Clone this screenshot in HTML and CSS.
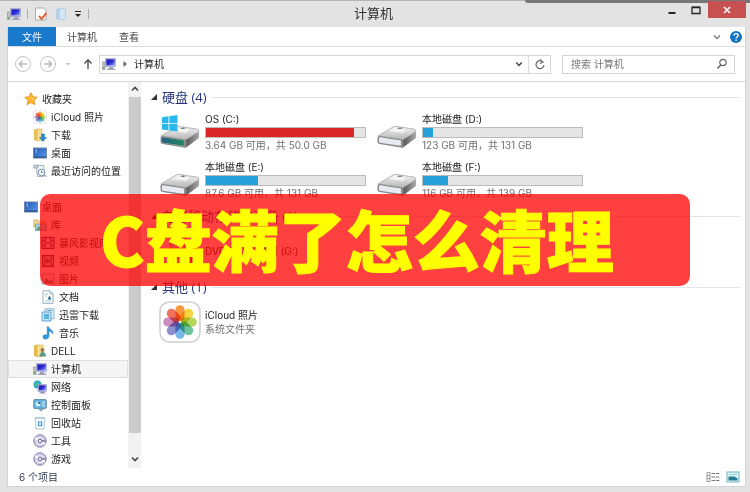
FILE: index.html
```
<!DOCTYPE html>
<html lang="zh-CN">
<head>
<meta charset="utf-8">
<title>计算机</title>
<link rel="stylesheet" href="styles.css">
</head>
<body>
<svg class="sprite" aria-hidden="true">
  <defs>
    <linearGradient id="g-body" x1="0" y1="0" x2="0" y2="1"><stop offset="0" stop-color="#f2f2f2"/><stop offset="1" stop-color="#b4b4b4"/></linearGradient>
    <linearGradient id="g-side" x1="0" y1="0" x2="1" y2="0"><stop offset="0" stop-color="#555"/><stop offset="1" stop-color="#aaa"/></linearGradient>
    <linearGradient id="g-os" x1="0" y1="0" x2="1" y2="0"><stop offset="0" stop-color="#2a5f7c"/><stop offset="1" stop-color="#1c8a62"/></linearGradient>
    <linearGradient id="g-screen" x1="0" y1="0" x2="1" y2="1"><stop offset="0" stop-color="#1616b8"/><stop offset=".5" stop-color="#2a2ad0"/><stop offset="1" stop-color="#8fa2f0"/></linearGradient>
    <linearGradient id="g-desk" x1="0" y1="0" x2="1" y2="1"><stop offset="0" stop-color="#2158b8"/><stop offset="1" stop-color="#5b9ae8"/></linearGradient>
    <radialGradient id="g-disc"><stop offset="0" stop-color="#fff"/><stop offset="1" stop-color="#c3c2e0"/></radialGradient>
  </defs>
  <symbol id="pc" viewBox="0 0 14 14"><rect x="0.5" y="5" width="2.5" height="7.5" fill="#c9c9c4" stroke="#888" stroke-width=".6"/><rect x="1" y="10" width="1.5" height="1.5" fill="#4a4"/><rect x="3.5" y="1.5" width="10" height="8" fill="#dadaf0" stroke="#9a9ac4" stroke-width=".7"/><rect x="4.3" y="2.3" width="8.4" height="6.2" fill="url(#g-screen)"/><path d="M7 10h4v1.5h2V13H5v-1.500h2z" fill="#9fa3b8"/></symbol>
  <symbol id="star" viewBox="0 0 14 14"><path d="M7 .8l1.900 4 4.400.5-3.300 3 .9 4.400L7 10.500l-3.900 2.200.9-4.400-3.300-3 4.400-.5z" fill="#ffb72e" stroke="#e08a1c" stroke-width=".8"/><path d="M7 3l1 3 3 .4-3 .8z" fill="#ffe18a"/></symbol>
  <symbol id="petals" viewBox="0 0 40 40">
    <g class="petals">
      <rect x="15.600" y="4" width="8.800" height="15" rx="4.400" fill="#f99a3c"/>
      <rect x="15.600" y="4" width="8.800" height="15" rx="4.400" fill="#f5d640" transform="rotate(45 20 20)"/>
      <rect x="15.600" y="4" width="8.800" height="15" rx="4.400" fill="#b5d65a" transform="rotate(90 20 20)"/>
      <rect x="15.600" y="4" width="8.800" height="15" rx="4.400" fill="#6cc49c" transform="rotate(135 20 20)"/>
      <rect x="15.600" y="4" width="8.800" height="15" rx="4.400" fill="#76b7e6" transform="rotate(180 20 20)"/>
      <rect x="15.600" y="4" width="8.800" height="15" rx="4.400" fill="#8c8fd0" transform="rotate(225 20 20)"/>
      <rect x="15.600" y="4" width="8.800" height="15" rx="4.400" fill="#cc8cc0" transform="rotate(270 20 20)"/>
      <rect x="15.600" y="4" width="8.800" height="15" rx="4.400" fill="#f37260" transform="rotate(315 20 20)"/>
    </g>
  </symbol>
  <symbol id="photos" viewBox="0 0 40 40"><rect x="1" y="1" width="38" height="38" rx="9" fill="#fff" stroke="#cfcfd4" stroke-width="1.500"/><use href="#petals"/></symbol>
  <symbol id="download" viewBox="0 0 14 14"><path d="M1 1.500l4-1V13l-4-1z" fill="#e8bf5a"/><path d="M4 1h5v11.500H4z" fill="#f6dd93" stroke="#d6ae52" stroke-width=".6"/><path d="M8.500 6h3v3.500h2L10 13.500 6.500 9.500h2z" fill="#2a8fd0" stroke="#1a6fae" stroke-width=".5"/></symbol>
  <symbol id="desktop" viewBox="0 0 14 14"><rect x=".5" y="2" width="13" height="10" fill="url(#g-desk)" stroke="#6d87ac"/><rect x="1" y="10.500" width="12" height="1.200" fill="#274a80"/><path d="M2.500 4h1.500M2.500 6h1.500" stroke="#cfe3ff"/></symbol>
  <symbol id="recent" viewBox="0 0 14 14"><path d="M3 1.500h8v11H4.500z" fill="#eef3f8" stroke="#93a5b8" stroke-width=".8"/><rect x=".8" y="1" width="4" height="3" fill="#c6d3e0" stroke="#8496a9" stroke-width=".6"/><circle cx="8.500" cy="8.500" r="3.300" fill="#fff" stroke="#7792b0"/><path d="M8.500 6.500v2h1.800" stroke="#4d6a90" fill="none" stroke-width=".8"/><path d="M11 11l2.500 1.500" stroke="#7792b0"/></symbol>
  <symbol id="library" viewBox="0 0 14 14"><path d="M.8 2h4l1 1.500H12V9H.8z" fill="#f2d78a" stroke="#c8a552" stroke-width=".7"/><path d="M2.500 6h11v6.500h-11z" fill="#9fd2e4" stroke="#5a9cb4" stroke-width=".7"/><path d="M3 12l3-4 3 4z" fill="#5aa06b"/></symbol>
  <symbol id="film" viewBox="0 0 14 14"><rect x="1" y="1.500" width="12" height="11" fill="#d9d8ee" stroke="#43416e" stroke-width="1.200"/><path d="M4 2v10M10 2v10M4 7h6M1 4.500h3M1 9.500h3M10 4.500h3M10 9.500h3" stroke="#43416e"/></symbol>
  <symbol id="video" viewBox="0 0 14 14"><rect x="1.500" y="1.500" width="11" height="11" fill="#b8d3da" stroke="#30464f" stroke-width="1.200"/><path d="M4 2v10M10 2v10" stroke="#30464f"/><path d="M5.500 4.500l4 2.500-4 2.500z" fill="#30464f"/></symbol>
  <symbol id="picture" viewBox="0 0 14 14"><rect x="1" y="2" width="12" height="10" fill="#eef3f6" stroke="#8298a5" stroke-width=".8"/><path d="M2 11l3-5 3 3 2-2 2 4z" fill="#4f8f86"/></symbol>
  <symbol id="doc" viewBox="0 0 14 14"><path d="M2 .8h7l3 3v9.500H2z" fill="#fff" stroke="#83a8bd" stroke-width=".9"/><path d="M9 .8v3h3" fill="none" stroke="#83a8bd" stroke-width=".8"/><path d="M4 4h3M4 6h2M4 11h6" stroke="#8fb7cc" stroke-width=".8"/><path d="M6.500 9.500l2-4 2 4z" fill="#276a8d"/></symbol>
  <symbol id="thunder" viewBox="0 0 14 14"><path d="M4 .8h9v10H4z" fill="#dff0fa" stroke="#6aa8cc" stroke-width=".8"/><path d="M1 4h9v9H1z" fill="#c4e4f7" stroke="#4a96c4" stroke-width=".8"/><path d="M3 6h5v5H3z" fill="#5cb0e0"/><path d="M6 2.500h5" stroke="#6aa8cc"/></symbol>
  <symbol id="music" viewBox="0 0 14 14"><path d="M6.200.8h1.300c.6 2.700 5 3 4.300 7-.6-1.500-2.200-2.400-3.900-2.600v4.900c0 3.600-5.900 4-6 1C1.800 9 4.200 8.300 6.200 9z" fill="#2d9be0" stroke="#1a70b4" stroke-width=".5"/></symbol>
  <symbol id="user" viewBox="0 0 14 14"><path d="M1 1.500l4-1V13l-4-1z" fill="#e2b94e"/><path d="M4 1h6v11.500H4z" fill="#f6dd93" stroke="#d6ae52" stroke-width=".6"/><circle cx="9.500" cy="6" r="2" fill="#a5794e"/><path d="M6.500 12.500c0-6 6.500-6 6.500 0z" fill="#5e9a8c"/></symbol>
  <symbol id="network" viewBox="0 0 14 14"><circle cx="4.500" cy="4.500" r="4" fill="#2ba4d8"/><path d="M2 2c2 0 4 1 2 3S3 8 1.500 6.500zM6 1.500l2 2-1.500 1z" fill="#4fc169"/><rect x="5" y="4.500" width="8.500" height="7" fill="#dcdcf2" stroke="#8c8cba" stroke-width=".6"/><rect x="5.800" y="5.300" width="6.900" height="5.200" fill="url(#g-screen)"/><path d="M8 11.500h3v1h1.500v1H6.500v-1H8z" fill="#8a8eab"/></symbol>
  <symbol id="panel" viewBox="0 0 14 14"><rect x=".7" y="1.500" width="12.600" height="9" rx="1" fill="#5fb0dc" stroke="#4b84a6" stroke-width=".8"/><circle cx="5" cy="6" r="2.500" fill="#d5effb"/><path d="M5 6V3.500A2.500 2.500 0 0 1 7.500 6z" fill="#287bb0"/><path d="M9 4h3M9 6h3M9 8h3" stroke="#fff" stroke-width=".8"/><path d="M5 11l3 2.500 4-3z" fill="#8fa9b9"/></symbol>
  <symbol id="bin" viewBox="0 0 14 14"><path d="M2 1.500h10l-1 11.500H3z" fill="#f2f8fb" stroke="#a5bfcd" stroke-width=".8"/><path d="M2 2.500h10" stroke="#b8ceda"/><path d="M5.500 6h3.200v3.500H5.500z" fill="none" stroke="#3a96d6" stroke-width="1.100"/></symbol>
  <symbol id="disc" viewBox="0 0 14 14"><circle cx="7" cy="7" r="6.200" fill="url(#g-disc)" stroke="#7977a0" stroke-width=".9"/><path d="M7 7l-5-3M7 7l5 3" stroke="#fff" stroke-width="1.500"/><circle cx="7" cy="7" r="1.800" fill="#fff" stroke="#605e90"/><path d="M9 7h3.500" stroke="#4c4a80"/></symbol>
  <symbol id="drive" viewBox="0 0 42 42"><path d="M2 25L17 16q1.500-.8 3-.6l18 2.600q2 .4 2 2.500L27 29z" fill="url(#g-body)" stroke="#a0a0a0" stroke-width=".7"/><path d="M40 20.500V27L27 36.500V29z" fill="url(#g-side)"/><path d="M3.500 25L26 28.500q1.500.3 1.500 2v5q0 1.500-1.500 1.200L3.500 33Q1.500 32.600 1.500 31v-4.300q0-1.900 2-1.700z" fill="#8b8b8b"/><path d="M4 26.300l20 3q1 .2 1 1.200v3.300q0 1-1 .9l-20-2.900q-1-.2-1-1.200v-3.400q0-1 1-.9z" fill="#e9e9f2"/><path d="M13 20l6-3 12 2-4 3z" fill="#fff" opacity=".6"/><path d="M21 17.200l3-.8 3 .6-3 1z" fill="#666"/></symbol>
  <symbol id="osdrive" viewBox="0 0 42 42"><use href="#drive"/><path d="M4 26.300l20 3q1 .2 1 1.200v3.300q0 1-1 .9l-20-2.900q-1-.2-1-1.200v-3.400q0-1 1-.9z" fill="url(#g-os)"/><path d="M3 6.300l6.500-1V12H3zM10.300 5.200L18.500 4v8h-8.200zM3 12.800h6.500v6.500l-6.500-.8zM10.300 12.800h8.200v7.600l-8.200-1z" fill="#2ab8ec"/></symbol>
  <symbol id="dvd" viewBox="0 0 42 42"><use href="#drive"/><circle cx="20" cy="14" r="9" fill="url(#g-disc)" stroke="#888"/><circle cx="20" cy="14" r="2" fill="#fff" stroke="#777"/></symbol>
</svg>

<div class="window">
  <header class="titlebar">
    <div class="quick">
      <svg class="icon"><use href="#pc"/></svg>
      <span class="sep"></span>
      <button aria-label="属性"><svg class="icon" viewBox="0 0 14 14"><path d="M1.500 1h8l2.500 2.500V13H1.500z" fill="#fff" stroke="#9a9a9a" stroke-width=".8"/><path d="M5 9l2.500 3 5-6" fill="none" stroke="#e2643c" stroke-width="2"/></svg></button>
      <button aria-label="新建文件夹"><svg class="icon" viewBox="0 0 14 14"><path d="M2 2l4-1v12l-4-1z" fill="#b5d0ea"/><path d="M5 1.500h6.500v11H5z" fill="#d5e5f4" stroke="#abc7e0" stroke-width=".7"/></svg></button>
      <button aria-label="自定义快速访问工具栏"><svg class="small" viewBox="0 0 8 8"><path d="M1 1.500h6" stroke="#222"/><path d="M1 4h6L4 7z" fill="#222"/></svg></button>
      <span class="sep"></span>
    </div>
    <h1>计算机</h1>
    <div class="controls">
      <button aria-label="最小化"><svg viewBox="0 0 10 10"><path d="M1.500 8h7" stroke="#222" stroke-width="2"/></svg></button>
      <button aria-label="最大化"><svg viewBox="0 0 10 10"><path d="M1 2.500h8v6H1z" fill="none" stroke="#222" stroke-width="1.300"/><path d="M1 2h8" stroke="#222"/></svg></button>
      <button class="close" aria-label="关闭"><svg viewBox="0 0 10 10"><path d="M2 2l6 6M8 2L2 8" stroke="#fff" stroke-width="1.500"/></svg></button>
    </div>
  </header>

  <div class="frame">
    <nav class="tabs">
      <button class="file">文件</button>
      <button>计算机</button>
      <button>查看</button>
      <span class="spacer"></span>
      <button class="plain" aria-label="展开功能区"><svg class="small" viewBox="0 0 8 8"><path d="M1 2.500l3 3 3-3" fill="none" stroke="#777" stroke-width="1.300"/></svg></button>
      <button class="plain" aria-label="帮助"><svg class="help" viewBox="0 0 12 12"><circle cx="6" cy="6" r="6" fill="#1673c4"/><path d="M4 4.600C4 2 8.200 2 8.200 4.500 8.200 6 6.100 6 6.100 7.500M6.100 8.600v1.500" fill="none" stroke="#fff" stroke-width="1.400"/></svg></button>
    </nav>

    <div class="navbar">
      <button aria-label="后退"><svg class="round" viewBox="0 0 18 18"><circle cx="9" cy="9" r="7.500" fill="none" stroke="#c4c4c4"/><path d="M13 9H5.500M8.500 5.800L5.300 9l3.200 3.200" fill="none" stroke="#b8b8b8" stroke-width="1.500"/></svg></button>
      <button aria-label="前进"><svg class="round" viewBox="0 0 18 18"><circle cx="9" cy="9" r="7.500" fill="none" stroke="#c4c4c4"/><path d="M5 9h7.500M9.500 5.800L12.700 9l-3.200 3.200" fill="none" stroke="#b8b8b8" stroke-width="1.500"/></svg></button>
      <button aria-label="最近浏览的位置"><svg class="small" viewBox="0 0 8 8"><path d="M1.500 3h5L4 5.500z" fill="#c4c4c4"/></svg></button>
      <button class="up" aria-label="上移"><svg class="up-arrow" viewBox="0 0 10 12"><path d="M5 11V2M1.500 5.500L5 1.800l3.500 3.700" fill="none" stroke="#555" stroke-width="1.400"/></svg></button>
      <div class="address">
        <svg class="icon"><use href="#pc"/></svg>
        <svg class="small" viewBox="0 0 8 8"><path d="M2.500 1L6 4 2.500 7z" fill="#666"/></svg>
        <button class="crumb">计算机</button>
        <button class="drop" aria-label="历史地址"><svg class="small" viewBox="0 0 8 8"><path d="M1.200 2.500L4 5.500l2.800-3" fill="none" stroke="#444" stroke-width="1.500"/></svg></button>
        <button class="refresh" aria-label="刷新"><svg class="refresh-icon" viewBox="0 0 12 12"><path d="M9 4A4 4 0 1 0 10 7M6 1.500l3 2.500-3 1.500" fill="none" stroke="#666" stroke-width="1.200"/></svg></button>
      </div>
      <label class="search">
        <input type="text" placeholder="搜索 计算机" aria-label="搜索 计算机">
        <svg class="lens" viewBox="0 0 12 12"><circle cx="7" cy="4.500" r="3.200" fill="none" stroke="#666" stroke-width="1.200"/><path d="M4.800 7L1.500 10.500" stroke="#666" stroke-width="1.600"/></svg>
      </label>
    </div>

    <div class="body">
      <aside>
        <ul class="tree">
          <li class="root"><a href="#"><svg class="icon"><use href="#star"/></svg>收藏夹</a></li>
          <li><a href="#"><svg class="icon"><use href="#photos"/></svg>iCloud 照片</a></li>
          <li><a href="#"><svg class="icon"><use href="#download"/></svg>下载</a></li>
          <li><a href="#"><svg class="icon"><use href="#desktop"/></svg>桌面</a></li>
          <li><a href="#"><svg class="icon"><use href="#recent"/></svg>最近访问的位置</a></li>
        </ul>
        <ul class="tree">
          <li class="root"><a href="#"><svg class="icon"><use href="#desktop"/></svg>桌面</a></li>
          <li><a href="#"><svg class="icon"><use href="#library"/></svg>库</a></li>
          <li class="deep"><a href="#"><svg class="icon"><use href="#film"/></svg>暴风影视库</a></li>
          <li class="deep"><a href="#"><svg class="icon"><use href="#video"/></svg>视频</a></li>
          <li class="deep"><a href="#"><svg class="icon"><use href="#picture"/></svg>图片</a></li>
          <li class="deep"><a href="#"><svg class="icon"><use href="#doc"/></svg>文档</a></li>
          <li class="deep"><a href="#"><svg class="icon"><use href="#thunder"/></svg>迅雷下载</a></li>
          <li class="deep"><a href="#"><svg class="icon"><use href="#music"/></svg>音乐</a></li>
          <li><a href="#"><svg class="icon"><use href="#user"/></svg>DELL</a></li>
          <li class="selected"><a href="#"><svg class="icon"><use href="#pc"/></svg>计算机</a></li>
          <li><a href="#"><svg class="icon"><use href="#network"/></svg>网络</a></li>
          <li><a href="#"><svg class="icon"><use href="#panel"/></svg>控制面板</a></li>
          <li><a href="#"><svg class="icon"><use href="#bin"/></svg>回收站</a></li>
          <li><a href="#"><svg class="icon"><use href="#disc"/></svg>工具</a></li>
          <li><a href="#"><svg class="icon"><use href="#disc"/></svg>游戏</a></li>
        </ul>
      </aside>
      <div class="scrollbar">
        <svg class="small" viewBox="0 0 8 8"><path d="M1 5.500l3-3 3 3" fill="none" stroke="#444" stroke-width="1.600"/></svg>
        <span class="thumb"></span>
        <svg class="small" viewBox="0 0 8 8"><path d="M1 2.500l3 3 3-3" fill="none" stroke="#444" stroke-width="1.600"/></svg>
      </div>

      <main>
        <section>
          <h2>硬盘 (4)</h2>
          <div class="tiles">
            <article><svg class="big"><use href="#osdrive"/></svg><div class="info"><h3>OS (C:)</h3><div class="bar"><span class="full" style="width:93%"></span></div><p>3.64 GB 可用，共 50.0 GB</p></div></article>
            <article><svg class="big"><use href="#drive"/></svg><div class="info"><h3>本地磁盘 (D:)</h3><div class="bar"><span style="width:6%"></span></div><p>123 GB 可用，共 131 GB</p></div></article>
            <article><svg class="big"><use href="#drive"/></svg><div class="info"><h3>本地磁盘 (E:)</h3><div class="bar"><span style="width:33%"></span></div><p>87.6 GB 可用，共 131 GB</p></div></article>
            <article><svg class="big"><use href="#drive"/></svg><div class="info"><h3>本地磁盘 (F:)</h3><div class="bar"><span style="width:16%"></span></div><p>116 GB 可用，共 139 GB</p></div></article>
          </div>
        </section>
        <section>
          <h2>有可移动存储的设备 (1)</h2>
          <div class="tiles">
            <article><svg class="big"><use href="#dvd"/></svg><div class="info"><h3>DVD RW 驱动器 (G:)</h3></div></article>
          </div>
        </section>
        <section>
          <h2>其他 (1)</h2>
          <div class="tiles">
            <article><svg class="big"><use href="#photos"/></svg><div class="info"><h3>iCloud 照片</h3><p>系统文件夹</p></div></article>
          </div>
        </section>
      </main>
    </div>

    <footer>
      <span>6 个项目</span>
      <span class="spacer"></span>
      <button aria-label="详细信息"><svg class="view" viewBox="0 0 14 12"><path d="M1 1.500h3v9H1zM1 4.500h3M1 7.500h3" fill="none" stroke="#999"/><path d="M5.500 2.500h8M5.500 6h8M5.500 9.500h8" stroke="#777" stroke-dasharray="3.500 .8"/></svg></button>
      <button aria-label="大图标"><svg class="view" viewBox="0 0 14 12"><rect x="1" y="1" width="12" height="10" fill="#dff4f6" stroke="#6fb2bd"/><path d="M2.500 5.500h6l3 2v2h-9z" fill="#217f91"/><path d="M3 3.500h8" stroke="#9bd3dc"/></svg></button>
    </footer>
  </div>
  <div class="banner">C盘满了怎么清理</div>
</div>
</body>
</html>
```
FILE: styles.css
```
* { box-sizing: border-box; }

body {
  margin: 0;
  font: 10px/14px Inter, "Noto Sans CJK SC", sans-serif;
  color: #222;
}

button, input {
  font: inherit;
  color: inherit;
  background: none;
  border: 0;
  padding: 0;
  margin: 0;
}

svg { display: block; flex: none; }
h1, h2, h3, p, ul { margin: 0; padding: 0; font-weight: 400; }
h3 { font-size: 10px; }
ul { list-style: none; }
a { color: inherit; text-decoration: none; }

.sprite { position: absolute; width: 0; height: 0; }
.petals rect { mix-blend-mode: multiply; }
.icon { width: 14px; height: 14px; }
.small { width: 8px; height: 8px; }
.spacer { flex: 1; }

.window {
  position: relative;
  display: flex;
  flex-direction: column;
  min-height: 100vh;
  padding: 0 4px 7px 7px;
  background: #e3e3e3;
  border-top: 1px solid #b4b4b4;
}

.window::before {
  content: "";
  position: absolute;
  top: -1px;
  right: 0;
  width: 30%;
  height: 3px;
  background: #77777a;
  border-radius: 0 0 0 3px;
}

.titlebar {
  display: grid;
  grid-template-columns: 1fr auto 1fr;
  height: 26px;
}

.quick { display: flex; align-items: center; gap: 6px; }
.sep { width: 1px; height: 10px; background: #aaa; }

h1 { font-size: 13px; line-height: 25px; color: #333; padding-right: 6px; }

.controls {
  display: flex;
  justify-content: flex-end;
  align-items: flex-start;
  position: relative;
}
.controls button { width: 24px; height: 17px; display: grid; place-items: center; }
.controls svg { width: 10px; height: 10px; }
.controls .close { width: 38px; background: #c75050; }

.frame {
  flex: 1;
  display: flex;
  flex-direction: column;
  background: #fff;
  border: 1px solid #d4d4d4;
  border-top: 0;
}

.tabs {
  display: flex;
  align-items: stretch;
  height: 20px;
  border-bottom: 1px solid #dcdcdc;
  padding-right: 3px;
  color: #444;
}
.tabs button { padding: 0 11px; }
.tabs .file { padding: 0 14px; background: #1979ca; color: #fff; }
.tabs .plain { padding: 0 0 0 9px; display: grid; place-items: center; }
.help { width: 12px; height: 12px; }

.navbar {
  display: flex;
  align-items: center;
  height: 35px;
  padding: 0 10px 0 6px;
  border-bottom: 1px solid #d8d8d8;
}
.navbar > button { margin-right: 7px; }
.round { width: 18px; height: 18px; }
.up-arrow { width: 10px; height: 12px; }
.navbar .up { margin: 0 6px 0 4px; }

.address, .search {
  display: flex;
  align-items: center;
  height: 19px;
  border: 1px solid #d6d6d6;
}
.address { flex: 1; padding-left: 2px; gap: 5px; }
.drop { margin-left: auto; }
.refresh {
  width: 22px;
  height: 17px;
  border-left: 1px solid #dcdcdc;
  display: grid;
  place-items: center;
}
.refresh-icon, .lens { width: 12px; height: 12px; }
.search { width: 173px; margin-left: 11px; padding: 0 6px 0 8px; }
.search input { flex: 1; min-width: 0; outline: 0; }
.search input::placeholder { color: #777; opacity: 1; }

.body { flex: 1; display: flex; }

aside { width: 120px; padding-top: 8px; }
.tree + .tree { margin-top: 18px; }
.tree a {
  display: flex;
  align-items: center;
  gap: 4px;
  height: 18px;
  padding-left: 25px;
  white-space: nowrap;
}
.tree .root a { padding-left: 16px; }
.tree .deep a { padding-left: 33px; }
.tree .selected { background: #f5f5f5; outline: 1px solid #e0e0e0; outline-offset: -1px; }

.scrollbar {
  width: 13px;
  display: flex;
  flex-direction: column;
  align-items: center;
  gap: 4px;
  padding: 3px 0 5px;
  background: #f2f2f2;
}
.thumb { flex: 1; width: 12px; margin-bottom: 18px; background: #cbcbcb; }

main {
  flex: 1;
  display: flex;
  flex-direction: column;
  gap: 3px;
  padding: 6px 5px 0 10px;
}

h2 {
  display: flex;
  align-items: center;
  gap: 5px;
  margin-bottom: 2px;
  font: 13px/18px "Open Sans", "Noto Sans CJK SC", sans-serif;
  color: #26357c;
}
h2::before {
  content: "";
  border-left: 6px solid transparent;
  border-bottom: 6px solid #333;
}
h2::after { content: ""; flex: 1; height: 1px; background: #e4e4e4; }

.tiles { display: grid; grid-template-columns: repeat(auto-fill, 217px); padding-left: 8px; }
article { display: flex; align-items: center; gap: 4px; height: 48px; }
.big { width: 42px; height: 42px; }
.info { width: 161px; white-space: nowrap; }
.info p { color: #707070; }
.bar { height: 11px; margin-top: 1px; background: #e5e5e5; border: 1px solid #bcbcbc; }
.bar span { display: block; height: 100%; background: #26a0da; }
.bar .full { background: #da2626; }

footer {
  display: flex;
  align-items: center;
  gap: 6px;
  height: 18px;
  padding: 0 5px 0 11px;
  color: #333c50;
}
.view { width: 14px; height: 12px; }

.banner {
  position: absolute;
  top: 193px;
  left: 40px;
  right: 60px;
  height: 92px;
  padding-left: 60px;
  border-radius: 10px;
  background: rgba(255, 0, 0, .75);
  color: #ff0;
  font: 900 67px/88px "Noto Sans CJK SC", sans-serif;
  white-space: nowrap;
  -webkit-text-stroke: 1px #ff0;
}
```
